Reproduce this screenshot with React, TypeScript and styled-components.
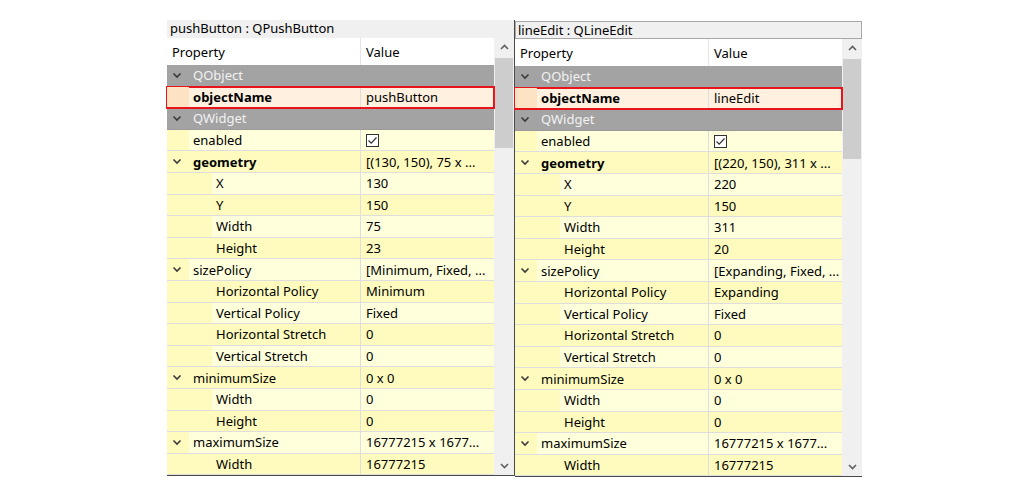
import React, { FC } from 'react';
import styled, { createGlobalStyle, css } from 'styled-components';

const GlobalStyle = createGlobalStyle`
  html, body {
    margin: 0;
    padding: 0;
    background: #ffffff;
  }
  body {
    font-family: "Noto Sans", "Open Sans", "Liberation Sans", sans-serif;
    font-size: 13px;
    color: #000;
  }
`;

type Row = {
  label: string;
  value?: string;
  group?: boolean;
  depth?: number;
  bold?: boolean;
  expand?: boolean;
  check?: boolean;
  cls?: 'object' | 'widget';
  highlight?: boolean;
};

const makeRows = (name: string, geo: string[], hPolicy: string): Row[] => [
  { label: 'QObject', group: true },
  { label: 'objectName', value: name, depth: 1, bold: true, cls: 'object', highlight: true },
  { label: 'QWidget', group: true },
  { label: 'enabled', check: true, depth: 1 },
  { label: 'geometry', value: geo[0], depth: 1, bold: true, expand: true },
  { label: 'X', value: geo[1], depth: 2 },
  { label: 'Y', value: geo[2], depth: 2 },
  { label: 'Width', value: geo[3], depth: 2 },
  { label: 'Height', value: geo[4], depth: 2 },
  { label: 'sizePolicy', value: `[${hPolicy}, Fixed, ...`, depth: 1, expand: true },
  { label: 'Horizontal Policy', value: hPolicy, depth: 2 },
  { label: 'Vertical Policy', value: 'Fixed', depth: 2 },
  { label: 'Horizontal Stretch', value: '0', depth: 2 },
  { label: 'Vertical Stretch', value: '0', depth: 2 },
  { label: 'minimumSize', value: '0 x 0', depth: 1, expand: true },
  { label: 'Width', value: '0', depth: 2 },
  { label: 'Height', value: '0', depth: 2 },
  { label: 'maximumSize', value: '16777215 x 1677...', depth: 1, expand: true },
  { label: 'Width', value: '16777215', depth: 2 },
];

const panels = [
  {
    title: 'pushButton : QPushButton',
    offset: 0,
    thumbHeight: 90,
    boxed: false,
    rows: makeRows('pushButton', ['[(130, 150), 75 x ...', '130', '150', '75', '23'], 'Minimum'),
  },
  {
    title: 'lineEdit : QLineEdit',
    offset: 1,
    thumbHeight: 100,
    boxed: true,
    rows: makeRows('lineEdit', ['[(220, 150), 311 x ...', '220', '150', '311', '20'], 'Expanding'),
  },
];

const palette = {
  object: { dark: '#fde3c3', light: '#fff0df' },
  widget: { dark: '#fffbbf', light: '#ffffdc' },
};

const ROW_H = 21.6;
const PROP_W = 193;

const Chevron: FC = () => (
  <svg width="10" height="7" viewBox="0 0 10 7">
    <path d="M1.5 1.5 L5 5 L8.5 1.5" fill="none" stroke="#3a3a3a" strokeWidth="1.6" />
  </svg>
);

const Arrow: FC<{ up?: boolean }> = ({ up }) => (
  <svg width="9" height="6" viewBox="0 0 9 6">
    <path
      d={up ? 'M1 5 L4.5 1.5 L8 5' : 'M1 1 L4.5 4.5 L8 1'}
      fill="none"
      stroke="#606060"
      strokeWidth="1.6"
    />
  </svg>
);

const CheckBox: FC = () => (
  <svg width="13" height="13" viewBox="0 0 13 13">
    <rect x="0.5" y="0.5" width="12" height="12" fill="#fff" stroke="#333" />
    <path d="M2.5 6.5 L5.2 9.2 L10.5 3.5" fill="none" stroke="#333" strokeWidth="1.2" />
  </svg>
);

const App: FC = () => {
  return (
    <Page>
      <GlobalStyle />
      {panels.map((p) => {
        let n = 0;
        return (
          <Panel key={p.title} $offset={p.offset}>
            <TitleBar $boxed={p.boxed}>{p.title}</TitleBar>
            <Body>
              <Table>
                <Header>
                  <HeaderCell>Property</HeaderCell>
                  <HeaderCell $divider>Value</HeaderCell>
                </Header>
                {p.rows.map((r, i) => {
                  if (r.group) {
                    n = 0;
                    return (
                      <GroupRow key={i}>
                        <ChevronSlot>
                          <Chevron />
                        </ChevronSlot>
                        {r.label}
                      </GroupRow>
                    );
                  }
                  const shades = palette[r.cls ?? 'widget'];
                  const dark = r.cls === 'object' ? false : n % 2 === 1;
                  n += 1;
                  const indent = (r.depth ?? 1) === 1 ? 22 : 45;
                  return (
                    <PropRow
                      key={i}
                      $bg={dark ? shades.dark : shades.light}
                      $highlight={r.highlight}
                    >
                      <NameCell $strip={shades.dark} $indent={indent} $bold={r.bold}>
                        {r.expand && (
                          <ChevronSlot>
                            <Chevron />
                          </ChevronSlot>
                        )}
                        {r.label}
                      </NameCell>
                      <ValueCell>{r.check ? <CheckBox /> : r.value}</ValueCell>
                    </PropRow>
                  );
                })}
              </Table>
              <ScrollBar>
                <ScrollButton>
                  <Arrow up />
                </ScrollButton>
                <Track>
                  <Thumb $height={p.thumbHeight} />
                </Track>
                <ScrollButton>
                  <Arrow />
                </ScrollButton>
              </ScrollBar>
            </Body>
          </Panel>
        );
      })}
    </Page>
  );
};

export default App;

const Page = styled.div`
  width: 1027px;
  height: 491px;
  box-sizing: border-box;
  padding: 20px 0 0 167px;
  display: flex;
  align-items: flex-start;
  overflow: hidden;
`;

const Panel = styled.div<{ $offset: number }>`
  width: 347px;
  margin-top: ${(p) => p.$offset}px;
  display: flex;
  flex-direction: column;
  border-right: 1px solid #4a4a4a;
  &:last-child {
    border-right: none;
  }
`;

const TitleBar = styled.div<{ $boxed: boolean }>`
  height: 18px;
  line-height: 17px;
  padding-left: 3px;
  background: #f0f0f0;
  font-size: 13px;
  box-sizing: border-box;
  white-space: nowrap;
  ${(p) =>
    p.$boxed &&
    css`
      border: 1px solid #a8a8a8;
      padding-left: 2px;
    `}
`;

const Body = styled.div`
  display: flex;
  border-bottom: 1px solid #4a4a4a;
`;

const Table = styled.div`
  width: 327px;
  display: flex;
  flex-direction: column;
`;

const Header = styled.div`
  display: grid;
  grid-template-columns: ${PROP_W}px 1fr;
  height: 27px;
  background: #fff;
`;

const HeaderCell = styled.div<{ $divider?: boolean }>`
  display: flex;
  align-items: center;
  padding-left: 5px;
  ${(p) =>
    p.$divider &&
    css`
      border-left: 1px solid #e5e5e5;
    `}
`;

const ChevronSlot = styled.span`
  position: absolute;
  left: 5px;
  top: 0;
  bottom: 0;
  display: flex;
  align-items: center;
`;

const GroupRow = styled.div`
  position: relative;
  height: ${ROW_H}px;
  box-sizing: border-box;
  display: flex;
  align-items: center;
  padding-left: 26px;
  background: #a3a3a3;
  color: #f2f2f2;
  border-bottom: 1px solid #9a9a9a;
`;

const PropRow = styled.div<{ $bg: string; $highlight?: boolean }>`
  position: relative;
  display: grid;
  grid-template-columns: ${PROP_W}px 1fr;
  height: ${ROW_H}px;
  box-sizing: border-box;
  background: ${(p) => p.$bg};
  border-bottom: 1px solid #dedede;
  ${(p) =>
    p.$highlight &&
    css`
      outline: 2px solid #e8141c;
      outline-offset: -1px;
      z-index: 1;
    `}
`;

const NameCell = styled.div<{ $strip: string; $indent: number; $bold?: boolean }>`
  position: relative;
  display: flex;
  align-items: center;
  padding-left: ${(p) => p.$indent + 4}px;
  font-weight: ${(p) => (p.$bold ? 700 : 400)};
  white-space: nowrap;
  background: linear-gradient(
    to right,
    ${(p) => p.$strip} 0,
    ${(p) => p.$strip} ${(p) => p.$indent}px,
    transparent ${(p) => p.$indent}px
  );
`;

const ValueCell = styled.div`
  display: flex;
  align-items: center;
  padding-left: 5px;
  border-left: 1px solid #dedede;
  white-space: nowrap;
  overflow: hidden;
`;

const ScrollBar = styled.div`
  width: 20px;
  background: #f0f0f0;
  display: flex;
  flex-direction: column;
`;

const ScrollButton = styled.div`
  height: 18px;
  display: flex;
  align-items: center;
  justify-content: center;
`;

const Track = styled.div`
  flex: 1;
  padding: 2px 1px 0;
`;

const Thumb = styled.div<{ $height: number }>`
  height: ${(p) => p.$height}px;
  background: #cdcdcd;
`;
